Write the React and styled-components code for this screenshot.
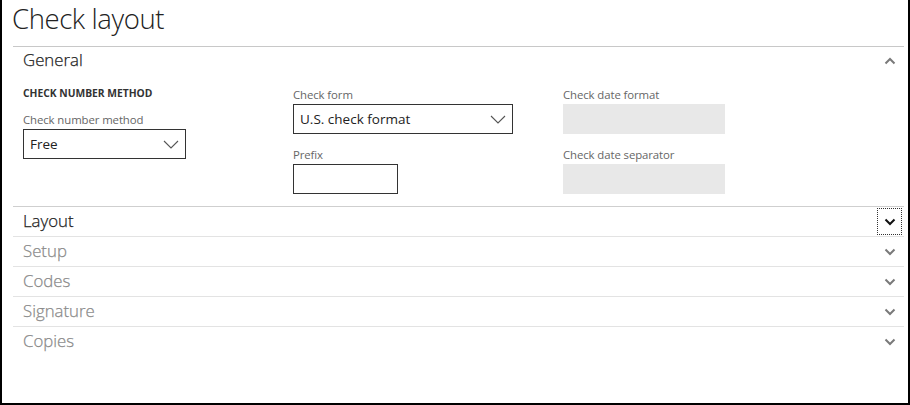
import React from "react";
import styled, { createGlobalStyle } from "styled-components";

const GlobalStyle = createGlobalStyle`
  html, body { margin: 0; padding: 0; background: #fff; }
  body { font-family: "Open Sans", "Noto Sans", sans-serif; color: #333; }
  * { box-sizing: border-box; }
`;

const Frame = styled.div`
  width: 910px;
  height: 405px;
  border: 2px solid #000;
  border-top: none;
  display: flex;
  flex-direction: column;
  padding: 0 4px 0 11px;
  background: #fff;
`;

const Title = styled.h1`
  margin: 0;
  height: 46px;
  font-family: "Open Sans", sans-serif;
  font-weight: 300;
  font-size: 27.5px;
  line-height: 38px;
  letter-spacing: -0.4px;
  color: #222;
  margin-left: -1px;
`;

const Section = styled.section`
  border-top: 1px solid ${(p) => p.$line || "#e3e3e3"};
`;

const Header = styled.div`
  height: ${(p) => p.$h || 29}px;
  display: flex;
  align-items: center;
  justify-content: space-between;
  padding-left: 10px;
  padding-right: 2px;
`;

const HeaderText = styled.span`
  font-size: 16.8px;
  font-weight: 300;
  line-height: 20px;
  margin-top: -2px;
  color: ${(p) => (p.$muted ? "#8a8a8a" : "#222")};
  -webkit-text-stroke: 0.25px ${(p) => (p.$muted ? "#8a8a8a" : "#222")};
`;

const ChevronBox = styled.span`
  width: 25px;
  height: 27px;
  display: flex;
  align-items: center;
  justify-content: center;
  border: 1px dotted ${(p) => (p.$focus ? "#333" : "transparent")};
`;

const Body = styled.div`
  display: grid;
  grid-template-columns: 270px 270px 270px;
  padding: 11px 0 12px 10px;
`;

const Column = styled.div`
  display: flex;
  flex-direction: column;
  gap: 12px;
`;

const GroupHeading = styled.div`
  height: 12px;
  margin-top: 1px;
  font-size: 10.3px;
  font-weight: 700;
  color: #333;
  line-height: 13px;
`;

const Field = styled.div`
  display: flex;
  flex-direction: column;
`;

const Label = styled.label`
  height: 18px;
  font-size: 11.4px;
  line-height: 18px;
  color: #666;
  letter-spacing: -0.1px;
`;

const Select = styled.div`
  width: ${(p) => p.$w}px;
  height: 30px;
  border: 1px solid #333;
  display: flex;
  align-items: center;
  justify-content: space-between;
  padding: 0 6px 0 6px;
  font-size: 13.5px;
  color: #222;
  background: #fff;
`;

const Input = styled.div`
  width: ${(p) => p.$w}px;
  height: 30px;
  border: 1px solid #333;
  background: #fff;
`;

const Disabled = styled.div`
  width: ${(p) => p.$w}px;
  height: 30px;
  background: #e8e8e8;
`;

const Spacer = styled.div`
  flex: 1;
`;

const SelectChevron = () => (
  <svg width="16" height="9" viewBox="0 0 16 9">
    <path d="M1 1 L8 8 L15 1" fill="none" stroke="#555" strokeWidth="1.1" />
  </svg>
);

const Chevron = ({ up, dark }) => (
  <svg width="12" height="8" viewBox="0 0 12 8">
    <path
      d={up ? "M1.5 6.5 L6 2 L10.5 6.5" : "M1.5 1.5 L6 6 L10.5 1.5"}
      fill="none"
      stroke={dark ? "#111" : "#7a7a7a"}
      strokeWidth="2"
    />
  </svg>
);

const collapsed = [
  { name: "Layout", active: true },
  { name: "Setup" },
  { name: "Codes" },
  { name: "Signature" },
  { name: "Copies" },
];

export default function App() {
  return (
    <>
      <GlobalStyle />
      <Frame>
        <Title>Check layout</Title>
        <Section $line="#c8c8c8">
          <Header $h={28}>
            <HeaderText>General</HeaderText>
            <ChevronBox>
              <Chevron up />
            </ChevronBox>
          </Header>
          <Body>
            <Column>
              <GroupHeading>CHECK NUMBER METHOD</GroupHeading>
              <Field>
                <Label>Check number method</Label>
                <Select $w={163}>
                  <span>Free</span>
                  <SelectChevron />
                </Select>
              </Field>
            </Column>
            <Column>
              <Field>
                <Label>Check form</Label>
                <Select $w={220}>
                  <span>U.S. check format</span>
                  <SelectChevron />
                </Select>
              </Field>
              <Field>
                <Label>Prefix</Label>
                <Input $w={105} />
              </Field>
            </Column>
            <Column>
              <Field>
                <Label>Check date format</Label>
                <Disabled $w={162} />
              </Field>
              <Field>
                <Label>Check date separator</Label>
                <Disabled $w={162} />
              </Field>
            </Column>
          </Body>
        </Section>
        {collapsed.map((s, i) => (
          <Section key={s.name} $line={i === 0 ? "#cfcfcf" : "#e3e3e3"}>
            <Header>
              <HeaderText $muted={!s.active}>{s.name}</HeaderText>
              <ChevronBox $focus={s.active}>
                <Chevron dark={s.active} />
              </ChevronBox>
            </Header>
          </Section>
        ))}
        <Spacer />
      </Frame>
    </>
  );
}
